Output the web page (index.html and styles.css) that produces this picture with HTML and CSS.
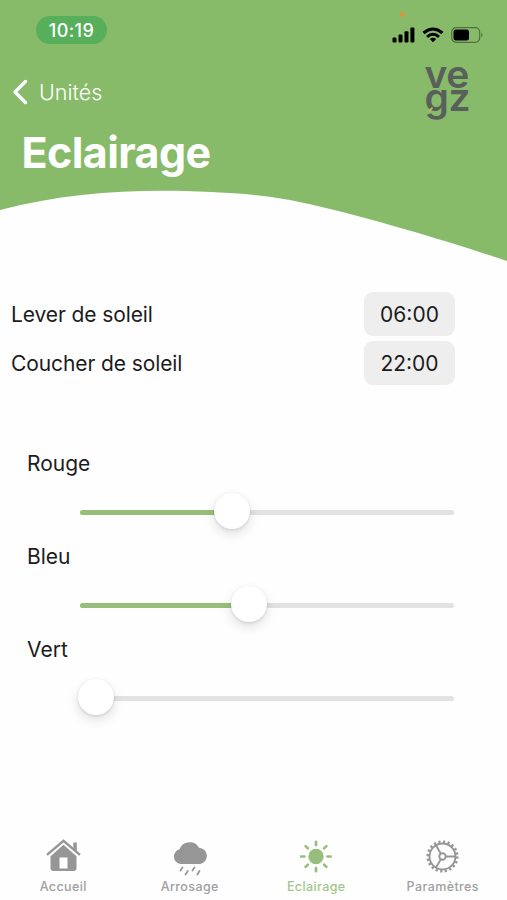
FILE: index.html
```html
<!DOCTYPE html>
<html lang="fr">
<head>
  <meta charset="UTF-8" />
  <meta name="viewport" content="width=device-width, initial-scale=1.0" />
  <title>Eclairage</title>
  <link rel="stylesheet" href="styles.css">
</head>
<body>
  <div class="screen">

    <!-- Header -->
    <header class="header">
      <svg class="wave" viewBox="0 0 507 262" preserveAspectRatio="none">
        <path d="M0 0H507V261C445 240 371 219 330 209C291 199 262 194.500 220 192.500C145 188.500 74 191 0 210Z" fill="#87bb69"/>
      </svg>

      <div class="status">
        <span class="clock">10:19</span>
        <span class="rec-dot"></span>
        <div class="status-icons">
          <svg class="signal" width="23" height="16" viewBox="0 0 23 16">
            <rect x="0.500" y="10.500" width="4" height="5" rx="1"/>
            <rect x="6.500" y="7.500" width="4" height="8" rx="1"/>
            <rect x="12.500" y="4.300" width="4" height="11.200" rx="1"/>
            <rect x="18.400" y="0.500" width="4" height="15" rx="1"/>
          </svg>
          <svg class="wifi" width="22" height="16" viewBox="0 0 22 16" fill="none" stroke="#000" stroke-width="3">
            <path d="M1.500 6Q11 -2 20.500 6"/>
            <path d="M5 9.800Q11 4.600 17 9.800"/>
            <path d="M11 15.300L7.800 12.100Q11 9.600 14.200 12.100Z" fill="#000" stroke="none"/>
          </svg>
          <svg class="battery" width="33" height="16" viewBox="0 0 33 16">
            <rect x="0.700" y="0.700" width="28" height="14.600" rx="4.500" fill="none" stroke="#4f713c" stroke-width="1.200"/>
            <rect x="2.500" y="2.500" width="15.500" height="11" rx="2.500"/>
            <path d="M30.300 5.500Q32.700 8 30.300 10.500Z" fill="#4f713c"/>
          </svg>
        </div>
      </div>

      <div class="nav">
        <a class="back">
          <svg width="17" height="26" viewBox="0 0 17 26" fill="none" stroke="#fff" stroke-width="3.400" stroke-linecap="round" stroke-linejoin="round">
            <path d="M13.500 2.500L3 13L13.500 23.500"/>
          </svg>
          <span>Unités</span>
        </a>
        <div class="logo">
          ve<br>gz
          <svg class="leaf" width="8" height="8" viewBox="0 0 8 8">
            <path d="M0.500 3.500L3 4.500" stroke="#87bb69" stroke-width="1.800"/>
            <path d="M3 6.500L6.500 2.500" stroke="#c3bd62" stroke-width="1.600"/>
          </svg>
        </div>
      </div>

      <h1>Eclairage</h1>
    </header>

    <!-- Sunrise / sunset -->
    <section class="times">
      <div class="time-row">
        <span>Lever de soleil</span>
        <span class="time">06:00</span>
      </div>
      <div class="time-row">
        <span>Coucher de soleil</span>
        <span class="time">22:00</span>
      </div>
    </section>

    <!-- Colour sliders -->
    <section class="colors">
      <div class="color">
        <span class="color-name">Rouge</span>
        <div class="track">
          <div class="fill" style="width: 40.600%"></div>
          <div class="thumb" style="left: 40.600%"></div>
        </div>
      </div>
      <div class="color">
        <span class="color-name">Bleu</span>
        <div class="track">
          <div class="fill" style="width: 45.200%"></div>
          <div class="thumb" style="left: 45.200%"></div>
        </div>
      </div>
      <div class="color">
        <span class="color-name">Vert</span>
        <div class="track">
          <div class="thumb" style="left: 4.300%"></div>
        </div>
      </div>
    </section>

    <!-- Tab bar -->
    <nav class="tabs">
      <a class="tab">
        <svg width="36" height="36" viewBox="0 0 36 36">
          <path d="M2 17.800L18.500 3.800L35 17.800" fill="none" stroke="#969696" stroke-width="2.400"/>
          <path d="M28.300 5.500H31.800V14L28.300 11Z"/>
          <path fill-rule="evenodd" d="M18.500 7.800L31.500 19.200V31Q31.500 34 28.500 34H8.500Q5.500 34 5.500 31V19.200ZM14.500 20.500V31.500H22.500V20.500Z"/>
        </svg>
        <span>Accueil</span>
      </a>
      <a class="tab">
        <svg width="36" height="36" viewBox="0 0 36 36">
          <path d="M8.500 27A7.500 7.500 0 0 1 7.500 12.300A10.800 10.800 0 0 1 27 10.700A8.200 8.200 0 0 1 28 27Z"/>
          <path d="M10.500 30.500L8.500 33.500M15.800 34L13.500 37.500M22.500 30.500L20.500 33.500M27.500 34L25.300 37.500" stroke="#969696" stroke-width="1.800" stroke-linecap="round"/>
        </svg>
        <span>Arrosage</span>
      </a>
      <a class="tab active">
        <svg width="36" height="36" viewBox="0 0 36 36">
          <circle cx="18" cy="19.500" r="7.700"/>
          <path d="M18 4.800V8M18 31V34.200M3.300 19.500H6.500M29.500 19.500H32.700M7.600 9.100L9.900 11.400M26.100 27.600L28.400 29.900M7.600 29.900L9.900 27.600M26.100 11.400L28.400 9.100" stroke="#97be7d" stroke-width="2.700" stroke-linecap="round"/>
        </svg>
        <span>Eclairage</span>
      </a>
      <a class="tab">
        <svg width="36" height="36" viewBox="0 0 36 36" fill="none" stroke="#969696">
          <circle cx="17.500" cy="19.500" r="14.800" stroke-width="2.600" stroke-dasharray="2.200 2.449"/>
          <circle cx="17.500" cy="19.500" r="13" stroke-width="1.900"/>
          <circle cx="17.500" cy="19.500" r="3.200" stroke-width="1.900"/>
          <path d="M20.700 19.500H30.500M15.900 16.700L11 8.400M15.900 22.300L11 30.600" stroke-width="1.900"/>
        </svg>
        <span>Paramètres</span>
      </a>
    </nav>

  </div>
</body>
</html>
```

FILE: styles.css
```css
body {
  font-family: Inter, 'Liberation Sans', sans-serif;
  background: #fefefe;
  color: #1c1c1c;
  margin: 0;
}

.screen {
  display: flex;
  flex-direction: column;
  width: 507px;
  height: 900px;
  overflow: hidden;
}

/* Header */
.header {
  position: relative;
  height: 262px;
  flex: none;
}

.wave {
  position: absolute;
  top: 0;
  left: 0;
  width: 100%;
  height: 100%;
  z-index: -1;
}

.status {
  display: flex;
  align-items: center;
  justify-content: space-between;
  padding: 16px 23px 0 36px;
}

.clock {
  width: 71px;
  height: 28px;
  line-height: 29px;
  border-radius: 14px;
  background: #57ae5b;
  color: #fff;
  font-size: 18px;
  font-weight: 500;
  letter-spacing: 0.400px;
  text-align: center;
}

.rec-dot {
  position: absolute;
  left: 400px;
  top: 12px;
  width: 5px;
  height: 5px;
  border-radius: 50%;
  background: #dc9440;
}

.status-icons {
  display: flex;
  gap: 7px;
  padding-top: 9px;
}

.nav {
  display: flex;
  justify-content: space-between;
  padding: 18px 37px 0 12px;
}

.back {
  display: flex;
  align-items: center;
  gap: 10px;
  height: 26px;
  margin-top: 17px;
  color: #fff;
  font-size: 21.500px;
  font-weight: 300;
}

.logo {
  position: relative;
  height: 60px;
  color: #59605b;
  font-size: 39px;
  font-weight: 600;
  line-height: 23px;
  letter-spacing: -0.500px;
}

.leaf {
  position: absolute;
  left: 1px;
  top: 43px;
}

h1 {
  margin: 4px 0 0 21.500px;
  color: #fff;
  font-size: 43px;
  line-height: 52px;
  font-weight: 700;
  letter-spacing: -0.600px;
}

/* Sunrise / sunset */
.times {
  display: flex;
  flex-direction: column;
  gap: 5px;
  padding: 30px 52px 0 11px;
}

.time-row {
  display: flex;
  align-items: center;
  justify-content: space-between;
  font-size: 21px;
  letter-spacing: -0.100px;
}

.time {
  width: 91px;
  height: 44px;
  line-height: 45px;
  border-radius: 9px;
  background: #eeeeee;
  letter-spacing: 0;
  text-align: center;
}

/* Sliders */
.colors {
  padding: 64px 53px 0 27px;
}

.color {
  height: 93px;
}

.color-name {
  display: block;
  font-size: 21px;
  line-height: 30px;
}

.track {
  position: relative;
  height: 5px;
  margin: 31px 0 0 53px;
  border-radius: 3px;
  background: #e2e2e2;
}

.fill {
  height: 5px;
  border-radius: 3px;
  background: #96c079;
}

.thumb {
  position: absolute;
  top: -17px;
  width: 36px;
  height: 36px;
  margin-left: -18px;
  border-radius: 50%;
  background: #fff;
  box-shadow: 0 5px 12px rgba(0, 0, 0, 0.120), 0 1px 3px rgba(0, 0, 0, 0.120);
}

/* Tab bar */
.tabs {
  display: flex;
  margin-top: auto;
  height: 63px;
}

.tab {
  display: flex;
  flex-direction: column;
  align-items: center;
  width: 126.500px;
  color: #a0a0a0;
  fill: #969696;
  font-size: 12.500px;
  font-weight: 500;
  line-height: 16px;
  letter-spacing: 0.400px;
}

.tab svg {
  overflow: visible;
  margin-bottom: 6px;
}

.tab.active {
  color: #a3c78c;
  fill: #97be7d;
}
```
